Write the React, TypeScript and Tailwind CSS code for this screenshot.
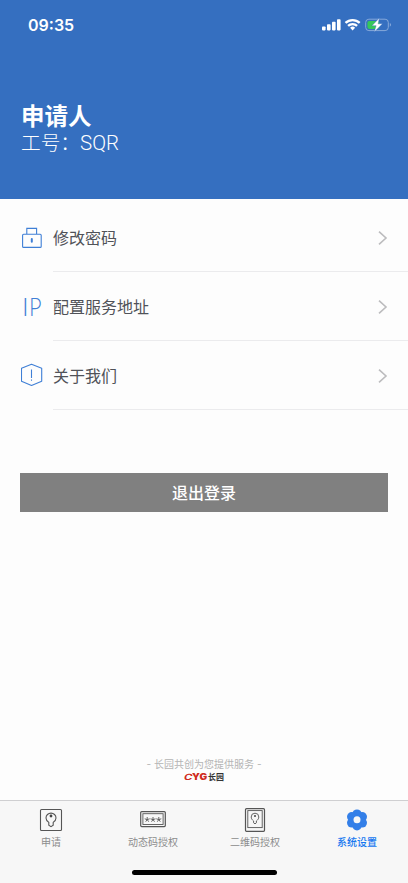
import type { ReactNode } from "react";

interface MenuItem {
  label: string;
  icon: ReactNode;
}

interface TabItem {
  label: string;
  icon: ReactNode;
  active?: boolean;
}

function LockIcon() {
  return (
    <svg width="22" height="22" viewBox="0 0 22 22" fill="none" stroke="#3f7fd6" strokeWidth="1.1">
      <rect x="1.6" y="7.2" width="18.6" height="13.2" rx="1" />
      <path d="M5.8 7V1.4h9.8V7" />
      <path d="M10.8 12v2.8" strokeWidth="2" strokeLinecap="round" />
    </svg>
  );
}

function IpIcon() {
  return (
    <span className="-mt-px flex pl-[1px] font-['Lato'] text-[25.5px] leading-[22px] font-light text-[#3f7fd6]">
      <span className="w-[6.5px]">I</span>
      <span className="origin-left scale-x-[.85]">P</span>
    </span>
  );
}

function AboutIcon() {
  return (
    <svg
      className="-mt-0.5"
      width="22"
      height="24"
      viewBox="0 0 22 24"
      fill="none"
      stroke="#3f7fd6"
      strokeWidth="1.1"
    >
      <path d="M10.5 1.2 20.7 5.2v13L10.5 22.4.5 18.2v-13z" strokeLinejoin="round" />
      <path d="M10.5 6.6v8.4M10.5 16.6v1.2" />
    </svg>
  );
}

function ChevronIcon() {
  return (
    <svg width="10" height="16" viewBox="0 0 10 16" fill="none" stroke="#bcbcbe" strokeWidth="1.6">
      <path d="M1 1.6 8 8l-7 6.4" />
    </svg>
  );
}

function ApplyIcon() {
  return (
    <svg width="24" height="24" viewBox="0 0 24 24" fill="none" stroke="#555" strokeWidth="1.1">
      <rect x="1.5" y="1.5" width="21" height="21" rx="1" />
      <path d="M9.8 14.4C8.2 13.2 7 12 7 9.9a5 4.8 0 0 1 10 0c0 2.1-1.2 3.3-2.8 4.5v2.8L12 18.7l-2.2-1.5z" />
      <circle cx="12" cy="8" r="1.4" fill="#444" stroke="none" />
    </svg>
  );
}

const starCenters = [7.2, 13, 18.8];

function CodeIcon() {
  return (
    <svg width="26" height="24" viewBox="0 0 26 24" fill="none" stroke="#555">
      <rect x=".7" y="3.6" width="24.6" height="15" rx="1" strokeWidth="1.2" />
      <rect x="2.9" y="5.7" width="20.2" height="10.8" strokeWidth=".9" />
      {starCenters.map((x) => (
        <path
          key={x}
          transform={`translate(${x} 11.6)`}
          d="M0 0v-2.6M0 0l2.5-.8M0 0l1.5 2.1M0 0l-1.5 2.1M0 0l-2.5-.8"
          strokeWidth=".9"
        />
      ))}
    </svg>
  );
}

function QrIcon() {
  return (
    <svg width="22" height="24" viewBox="0 0 22 24" fill="none" stroke="#555">
      <rect x="1.5" y=".7" width="19" height="22.6" rx="1" strokeWidth="1.2" />
      <rect x="3.8" y="2.6" width="14.4" height="17" strokeWidth=".9" />
      <path
        d="M9.6 13C8.4 12 7.2 10.8 7.2 9a3.8 3.8 0 0 1 7.6 0c0 1.800-1.200 3-2.400 4v1.800L11 15.900l-1.400-1.100z"
        strokeWidth=".9"
      />
      <circle cx="11" cy="8" r="1" fill="#444" stroke="none" />
    </svg>
  );
}

function SettingsIcon() {
  return (
    <svg width="24" height="24" viewBox="0 0 24 24" fill="#337fe8">
      <circle cx="12" cy="6.2" r="4.8" />
      <circle cx="17.2" cy="8.8" r="4.8" />
      <circle cx="17.2" cy="14.8" r="4.8" />
      <circle cx="12" cy="17.6" r="4.8" />
      <circle cx="6.8" cy="14.8" r="4.8" />
      <circle cx="6.8" cy="8.8" r="4.8" />
      <circle cx="12" cy="11.8" r="3.5" fill="#f7f7f7" />
    </svg>
  );
}

function StatusIcons() {
  return (
    <svg width="70" height="14" viewBox="0 0 70 14" fill="#fff">
      <rect x="0" y="8.4" width="3.6" height="4" rx=".8" />
      <rect x="5" y="6.2" width="3.6" height="6.2" rx=".8" />
      <rect x="10" y="3.8" width="3.6" height="8.6" rx=".8" />
      <rect x="15" y="1.2" width="3.6" height="11.2" rx=".8" />
      <g fill="none" stroke="#fff" strokeWidth="2.3">
        <path d="M23.5 4.9a10.3 10.3 0 0 1 14.2 0" />
        <path d="M26.1 7.9a6.4 6.4 0 0 1 9 0" />
      </g>
      <path d="M28.1 9.7a3.7 3.7 0 0 1 5 0l-2.5 2.7z" />
      <rect x="43.7" y="1.2" width="22.6" height="11.4" rx="3.2" fill="none" stroke="#86a9da" />
      <rect x="45.4" y="2.9" width="12" height="8" rx="1.8" fill="#35c759" />
      <path d="M67.8 5.1c1.7.6 1.7 3 0 3.6z" fill="#86a9da" />
      <path
        d="M57.4 0 49.9 7.7h4.2L52.2 14l8.3-8.2h-4.4z"
        stroke="#356fc0"
        strokeWidth=".4"
      />
    </svg>
  );
}

function BrandLogo() {
  return (
    <div className="flex h-3 items-center text-[8.5px] leading-3">
      <span className="flex w-[24px] text-[#d02a20]">
        <span className="w-2 font-['Inter'] font-bold">
          <span className="inline-block origin-left scale-x-[1.35] -skew-x-12">C</span>
        </span>
        <span className="font-['Inter'] font-black">
          <span className="inline-block origin-left scale-x-[1.2]">YG</span>
        </span>
      </span>
      <span className="text-[8px] font-bold text-[#333]">长园</span>
    </div>
  );
}

const menuItems: MenuItem[] = [
  { label: "修改密码", icon: <LockIcon /> },
  { label: "配置服务地址", icon: <IpIcon /> },
  { label: "关于我们", icon: <AboutIcon /> },
];

const tabs: TabItem[] = [
  { label: "申请", icon: <ApplyIcon /> },
  { label: "动态码授权", icon: <CodeIcon /> },
  { label: "二维码授权", icon: <QrIcon /> },
  { label: "系统设置", icon: <SettingsIcon />, active: true },
];

export default function App() {
  return (
    <div className="flex h-[883px] w-[408px] flex-col overflow-hidden bg-[#fdfdfd] font-['Inter','Noto_Sans_CJK_SC',sans-serif]">
      <header className="h-[199px] shrink-0 bg-[#356fc0] text-white">
        <div className="flex h-[50px] items-center justify-between pr-4 pl-7">
          <span className="text-[16px] font-semibold">09:35</span>
          <StatusIcons />
        </div>
        <div className="pt-[53px] pl-[21px]">
          <h1 className="text-[23.5px] leading-7 font-bold">申请人</h1>
          <p className="-mt-px font-['Roboto','Noto_Sans_CJK_SC',sans-serif] text-[19.7px] leading-[26px] font-light">
            工号：<span className="text-[20.5px]">SQR</span>
          </p>
        </div>
      </header>

      <main className="flex flex-1 flex-col">
        <ul className="pt-1">
          {menuItems.map((item) => (
            <li key={item.label} className="flex h-[69px] items-center pl-[21px]">
              <span className="flex w-8 items-center">{item.icon}</span>
              <span className="flex h-full flex-1 items-center justify-between border-b border-[#ebebed] pt-0.5 pr-5 text-[16px] text-[#505258]">
                {item.label}
                <ChevronIcon />
              </span>
            </li>
          ))}
        </ul>

        <button
          type="button"
          className="mx-5 mt-[63px] h-[39px] bg-[#808080] text-[16px] font-medium text-white"
        >
          退出登录
        </button>

        <footer className="mt-auto flex flex-col items-center pb-[17px]">
          <p className="flex gap-[3px] text-[10px] leading-[14px] text-[#b4b4b4]">
            <span>-</span>
            <span>长园共创为您提供服务</span>
            <span>-</span>
          </p>
          <BrandLogo />
        </footer>
      </main>

      <nav className="flex h-[83px] shrink-0 flex-col border-t border-[#cfcfd1] bg-[#f7f7f7]">
        <div className="grid grid-cols-4 pt-[7px]">
          {tabs.map((tab) => (
            <button
              key={tab.label}
              type="button"
              className={`flex flex-col items-center gap-[3px] text-[10px] leading-[14px] ${
                tab.active ? "font-medium text-[#1677f0]" : "text-[#8c8c8c]"
              }`}
            >
              {tab.icon}
              {tab.label}
            </button>
          ))}
        </div>
        <div className="mx-auto mt-auto mb-2 h-[5px] w-[145px] rounded-full bg-black" />
      </nav>
    </div>
  );
}
